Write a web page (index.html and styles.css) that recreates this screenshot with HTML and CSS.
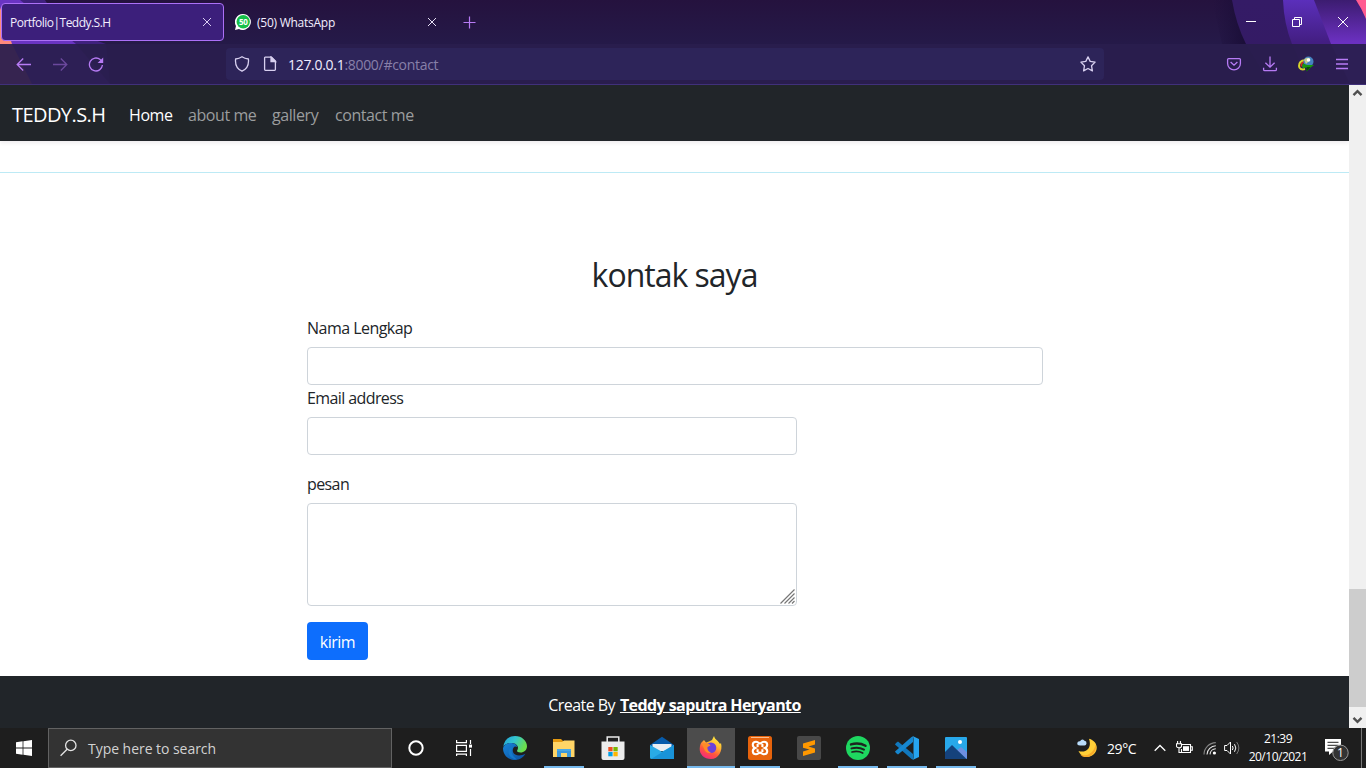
FILE: index.html
```html
<!DOCTYPE html>
<html lang="id">
<head>
<meta charset="utf-8">
<title>Portfolio|Teddy.S.H</title>
<link rel="stylesheet" href="styles.css">
</head>
<body>
<div class="screen">
  <header class="chrome">
    <svg class="theme" width="1366" height="84" viewBox="0 0 1366 84">
      <defs>
        <linearGradient id="base" x1="0" y1="0" x2="0" y2="1"><stop offset="0" stop-color="#25123e"/><stop offset=".55" stop-color="#251a49"/><stop offset="1" stop-color="#251a49"/></linearGradient>
        <linearGradient id="shade" x1="0" y1="0" x2="1" y2="0"><stop offset="0" stop-color="#1d0f3c" stop-opacity="0"/><stop offset="1" stop-color="#190d36"/></linearGradient>
        <linearGradient id="w1" x1="0" y1="0" x2="0" y2="1"><stop offset="0" stop-color="#341b66"/><stop offset="1" stop-color="#341a64"/></linearGradient>
        <linearGradient id="w2" x1="0" y1="0" x2="0" y2="1"><stop offset="0" stop-color="#5b2fbb"/><stop offset=".5" stop-color="#431e82"/></linearGradient>
        <linearGradient id="w3" x1="0" y1="0" x2="0" y2="1"><stop offset="0" stop-color="#3c1c70"/><stop offset=".5" stop-color="#6b30c0"/></linearGradient>
      </defs>
      <rect width="1366" height="84" fill="url(#base)"/>
      <path d="M0 0H45Q62 30 106 44L110 84H0Z" fill="#3f217e"/>
      <path d="M0 0H20L76 44L110 84H0Z" fill="#6a34c3"/>
      <path d="M0 7L12 44L32 84H0Z" fill="#ff897c"/>
      <path d="M1212 0H1234L1248 44H1222Z" fill="url(#shade)"/>
      <path d="M1232 0Q1236 24 1246 44L1270 84H1366V0Z" fill="url(#w1)"/>
      <path d="M1283 0Q1284 24 1292 44L1310 84H1366V0Z" fill="url(#w2)"/>
      <path d="M1314 0L1331 44L1350 84H1366V0Z" fill="url(#w3)"/>
      <path d="M1356 0H1366V19Q1362 9 1356 0Z" fill="#ff5b91"/>
    </svg>
    <div class="tabs">
      <div class="tab tab-active"><span class="t-tab1">Portfolio|Teddy.S.H</span>
        <svg width="10" height="10" viewBox="0 0 10 10" stroke="#d9cdf2" fill="none"><path d="M1 1L9 9M9 1L1 9"/></svg>
      </div>
      <div class="tab tab-idle">
        <svg class="wa" width="16" height="16" viewBox="0 0 16 16"><path d="M8 0a8 8 0 1 1-4 15L0 16L1 12A8 8 0 0 1 8 0Z" fill="#fff"/><circle cx="8.2" cy="7.8" r="6.7" fill="#16c149"/><text x="8.2" y="10.8" text-anchor="middle" class="wa-count">50</text></svg>
        <span class="t-tab2">(50) WhatsApp</span>
        <svg width="10" height="10" viewBox="0 0 10 10" stroke="#e6e0f5" fill="none"><path d="M1 1L9 9M9 1L1 9"/></svg>
      </div>
      <svg class="plus" width="13" height="13" viewBox="0 0 13 13" stroke="#b77bf5" fill="none" stroke-width="1.2"><path d="M6.5 .5V12.5M.5 6.5H12.5"/></svg>
      <div class="winbtns">
        <span><svg width="10" height="10" viewBox="0 0 10 10"><path d="M0 4.5H10" stroke="#fff"/></svg></span>
        <span><svg width="10" height="10" viewBox="0 0 10 10" fill="none" stroke="#fff"><path d="M.5 2.5H7.5V9.5H.5ZM2.5 2.5V.5H9.5V7.5H7.5"/></svg></span>
        <span><svg width="10" height="10" viewBox="0 0 10 10" stroke="#fff"><path d="M0 0L10 10M10 0L0 10"/></svg></span>
      </div>
    </div>
    <div class="toolbar">
      <div class="tools">
        <span><svg width="16" height="16" viewBox="0 0 16 16" class="ic"><path d="M15 8.5H1.5M7.2 2.5L1.2 8.5L7.2 14.5"/></svg></span>
        <span class="dim"><svg width="16" height="16" viewBox="0 0 16 16" class="ic"><path d="M1 8.5H14.5M8.8 2.5L14.8 8.5L8.8 14.5"/></svg></span>
        <span><svg width="16" height="16" viewBox="0 0 16 16" class="ic"><path d="M14.4 9A6.5 6.5 0 1 1 12.2 3.6L14 5.4"/><path d="M15.2 1.4V7H9.6Z" fill="#b77bf5" stroke="none"/></svg></span>
      </div>
      <div class="urlbar">
        <svg width="16" height="16" viewBox="0 0 16 16" class="ic pale"><path d="M8 .8C6 2.2 4 2.8 1.6 3C1 8.5 3.4 13.2 8 15.2C12.6 13.2 15 8.5 14.4 3C12 2.8 10 2.2 8 .8Z"/></svg>
        <svg width="16" height="16" viewBox="0 0 16 16" class="ic pale"><path d="M3.2 1.2H9.5L13.4 5V13.6Q13.4 14.4 12.6 14.4H3.4Q2.6 14.4 2.6 13.6V2Q2.6 1.2 3.2 1.2Z"/><path d="M9 1V5.5H13.5Z" fill="#d8d0f0"/></svg>
        <span class="t-url"><b>127.0.0.1</b>:8000/#contact</span>
        <svg class="ic pale star" width="16" height="16" viewBox="0 0 16 16"><path stroke-linejoin="round" d="M8 .9L10.2 5.4L15.1 6.1L11.5 9.7L12.4 14.9L8 12.5L3.6 14.9L4.5 9.7L.9 6.1L5.8 5.4Z"/></svg>
      </div>
      <div class="tools right">
        <span><svg width="16" height="16" viewBox="0 0 16 16" class="ic"><path d="M2.6 2.6H13.4Q14.4 2.6 14.4 3.6V7.4C14.4 11 11.5 13.8 8 13.8S1.6 11 1.6 7.4V3.6Q1.6 2.6 2.6 2.6ZM4.6 6L8 9.2L11.4 6"/></svg></span>
        <span><svg width="16" height="16" viewBox="0 0 16 16" class="ic"><path d="M8 .5V11M3.4 6.7L8 11.2L12.6 6.7M1.6 11.8V13.4Q1.6 14.6 2.8 14.6H13.2Q14.4 14.6 14.4 13.4V11.8"/></svg></span>
        <span><svg width="16" height="16" viewBox="0 0 16 16"><path d="M7 4.2C3 4.5 1 7 1 10C1 13 4 14 7 13" fill="none" stroke="#d9d42c" stroke-width="2"/><path d="M7 5.8C4.4 6 3 8 3.2 10.5" fill="none" stroke="#d3301c" stroke-width="1.5"/><path d="M6 8C4.6 9 4.6 11 6 12" fill="none" stroke="#2f9b2a" stroke-width="1.6"/><circle cx="10.5" cy="5.6" r="5" fill="#4583c0"/><path d="M6 4C7 1.6 11 1 12 2.4L10 6L8 8Z" fill="#c4cb91"/><circle cx="10.5" cy="4" r="1.8" fill="#fff"/><path d="M5 7.5L9 9L16 9L12 12L8.5 15.5L9 11.5L5.5 12Z" fill="#16970d"/><path d="M8.5 15.5L9 11L12.5 11Z" fill="#075305"/></svg></span>
        <span><svg width="14" height="14" viewBox="0 0 14 14" class="ic"><path d="M1 2.5H13M1 7H13M1 11.5H13"/></svg></span>
      </div>
    </div>
  </header>

  <div class="viewport">
    <div class="page">
      <nav class="navbar">
        <a class="brand">TEDDY.S.H</a>
        <a class="n1">Home</a><a class="n2">about me</a><a class="n3">gallery</a><a class="n4">contact me</a>
      </nav>
      <main class="contact">
        <h2><span>kontak saya</span></h2>
        <form class="form">
          <label class="l1">Nama Lengkap</label>
          <input class="field wide">
          <label class="l2">Email address</label>
          <input class="field mail">
          <label class="l3">pesan</label>
          <div class="field area"><svg width="15" height="15" viewBox="0 0 15 15" stroke="#777" stroke-width="1.2"><path d="M.5 14.5L14.5 .5M4.5 14.5L14.5 4.5M8.5 14.5L14.5 8.5M12 14.5L14.5 12"/></svg></div>
          <button type="button" class="send">kirim</button>
        </form>
      </main>
      <footer class="foot"><span class="f1">Create By</span> <a class="f2">Teddy saputra Heryanto</a></footer>
    </div>
    <aside class="scroll">
      <svg width="17" height="17" viewBox="0 0 17 17" fill="none" stroke="#505050" stroke-width="2.4"><path d="M4.5 10.2L8.5 6.2L12.5 10.2"/></svg>
      <i class="thumb"></i>
      <svg width="17" height="21" viewBox="0 0 17 21" fill="none" stroke="#505050" stroke-width="2.4"><path d="M4.5 10.8L8.5 14.8L12.5 10.8"/></svg>
    </aside>
  </div>

  <div class="taskbar">
    <span class="start"><svg width="16" height="16" viewBox="0 0 16 16" fill="#fff"><path d="M0 2.2L6.6 1.3V7.6H0ZM7.4 1.2L16 0V7.6H7.4ZM0 8.4H6.6V14.7L0 13.8ZM7.4 8.4H16V16L7.4 14.8Z"/></svg></span>
    <div class="search"><svg width="18" height="18" viewBox="0 0 18 18" fill="none" stroke="#e4e4e4" stroke-width="1.3"><circle cx="10.8" cy="6.4" r="5.2"/><path d="M7.1 10.2L.6 16.8"/></svg><span class="t-search">Type here to search</span></div>
    <span class="cell sys"><svg width="16" height="16" viewBox="0 0 16 16"><circle cx="8" cy="8" r="6.7" fill="none" stroke="#fff" stroke-width="2"/></svg></span>
    <span class="cell sys"><svg width="18" height="18" viewBox="0 0 18 18" fill="none" stroke="#fff" stroke-width="1.2"><path d="M1.6 1V3.6H11.4V1M1.6 6.4H11.4V12.4H1.6ZM1.6 17V15.2H11.4V17M15.5 1V5M15.5 10V17"/><path d="M14 5.6H17V8.6H14Z" fill="#fff" stroke="none"/></svg></span>
    <div class="apps">
      <span class="cell"><svg width="24" height="24" viewBox="0 0 24 24"><defs><linearGradient id="e1" x1="0" y1="0" x2="1" y2=".4"><stop offset="0" stop-color="#20a0dc"/><stop offset=".5" stop-color="#34c5ce"/><stop offset="1" stop-color="#6bdf4c"/></linearGradient><linearGradient id="e2" x1="0" y1="0" x2="1" y2="1"><stop stop-color="#1784d8"/><stop offset="1" stop-color="#0c4f9f"/></linearGradient></defs><path d="M.2 11C1 4.5 5.5 0 12 0C19 0 24 5 24 10.2C24 14 21 16.5 17.5 16.5C14.5 16.5 13.4 15.2 14.4 14C16.4 10.5 13.2 7 8.5 7C4 7 1 9 .2 11Z" fill="url(#e1)"/><path d="M0 12C1 8.5 4.5 6.8 8.5 7C12.5 7.2 14 9.2 14 11C11 9 9 13 10 16C11 19.5 17 20.8 22.4 17.8C20.5 21.5 16.5 24 12 24C5 24 0 19 0 12Z" fill="url(#e2)"/><path d="M9.5 11C7 15 9 20 14 23.5C8 23 5.5 19 5.5 15.5C5.5 12.5 7.5 11 9.5 11Z" fill="#1479cb"/></svg></span>
      <span class="cell open"><svg width="24" height="24" viewBox="0 0 24 24"><path d="M1 3H9L11 5H22V11H1Z" fill="#e59a11"/><path d="M1 6H10L12 4.5H22.5V21H1Z" fill="#ffd567"/><path d="M5 21V13H19V21H15V17H9V21Z" fill="#3c99dd"/><path d="M5 13H19V15H5Z" fill="#4aa9e6"/></svg></span>
      <span class="cell"><svg width="24" height="24" viewBox="0 0 24 24"><path d="M6.2 7V1H17.8V7" fill="none" stroke="#ececec" stroke-width="1.5"/><path d="M.5 5.5H23.5V22Q23.5 24 21.5 24H2.5Q.5 24 .5 22Z" fill="#ececec"/><path d="M7.3 11H11.6V15.3H7.3Z" fill="#ef4e20"/><path d="M12.4 11H16.7V15.3H12.4Z" fill="#7ab800"/><path d="M7.3 16H11.6V20.3H7.3Z" fill="#00a0e8"/><path d="M12.4 16H16.7V20.3H12.4Z" fill="#ffb600"/></svg></span>
      <span class="cell"><svg width="24" height="24" viewBox="0 0 24 24"><path d="M0 9L12 .7L24 9V12H0Z" fill="#075baa"/><path d="M2.5 8H21.5V15H2.5Z" fill="#e9eef2"/><path d="M0 9L12 15.7L24 9V21.5Q24 23 22.5 23H1.5Q0 23 0 21.5Z" fill="#29aae6"/><path d="M1 23L24 9V22.9Z" fill="#1993d8"/></svg></span>
      <span class="cell open active"><svg width="24" height="24" viewBox="0 0 24 24"><defs><linearGradient id="ff" x1=".8" y1="0" x2=".3" y2="1"><stop stop-color="#fff044"/><stop offset=".35" stop-color="#ffbd31"/><stop offset=".68" stop-color="#ff593a"/><stop offset="1" stop-color="#f52580"/></linearGradient></defs><path d="M3 6L5 4L7 6.5L10 5.5L13 4L15 0C16 4 19 4 21 8L22 7C24 15 19.5 23 12 23C5 23 .5 18 .7 13C.8 10 1.5 7 3 6Z" fill="url(#ff)"/><circle cx="12" cy="11.8" r="5.3" fill="#6a42db"/><path d="M3 8C7 6.5 10 7 11.5 9.5L8.5 11C8 13.5 9.5 16 12 16.5C9 18 6 16 5.2 13Z" fill="#ff8b26"/></svg></span>
      <span class="cell open"><svg width="24" height="24" viewBox="0 0 24 24"><rect width="24" height="24" rx="2.5" fill="#e7630c"/><path d="M3 1.5H21" stroke="#f7bd91"/><path d="M8 5.8C3.8 5.8 4 10.7 7.2 12C3.8 13.3 4 18.2 8 18.2C10 18.2 10.4 16.6 12 16.6S14 18.2 16 18.2C20 18.2 20.2 13.3 16.8 12C20 10.7 20.2 5.8 16 5.8C14 5.8 13.6 7.4 12 7.4S10 5.8 8 5.8ZM9.6 8V11M14.4 8V11M9.6 13.2V16M14.4 13.2V16" fill="none" stroke="#fff" stroke-width="2.1"/></svg></span>
      <span class="cell"><svg width="24" height="24" viewBox="0 0 24 24"><rect width="24" height="24" rx="2" fill="#484848"/><path d="M6 7.5L18 4V8.6L11.5 10.5L18 12.4V16.5L6 20V15.4L12.5 13.5L6 11.7Z" fill="#ff9800"/></svg></span>
      <span class="cell open"><svg width="24" height="24" viewBox="0 0 24 24"><circle cx="12" cy="12" r="12" fill="#1ed760"/><g fill="none" stroke="#1d241f" stroke-linecap="round"><path d="M5 8.4C10 7 15.5 7.5 19.5 9.8" stroke-width="2.4"/><path d="M5.5 12.4C10 11.1 14.5 11.6 18 13.6" stroke-width="2"/><path d="M6 16C10 15 13.5 15.3 16.7 17" stroke-width="1.7"/></g></svg></span>
      <span class="cell open"><svg width="24" height="24" viewBox="0 0 24 24"><path d="M1 7L3 5.5L18 18V23.5L16.5 23L0 8.5Z" fill="#1178bd"/><path d="M1 17L3 18.5L18 6V.5L16.5 1L0 15.5Z" fill="#1687d0"/><path d="M17.5 0L24 3V21L17.5 24Q18.5 23 18.5 21.5V2.5Q18.5 1 17.5 0Z" fill="#26a4ef"/></svg></span>
      <span class="cell open"><svg width="22" height="22" viewBox="0 0 22 22"><rect width="22" height="22" rx="1" fill="#28a8ea"/><path d="M11 14L16 10L22 15V22Z" fill="#6e8fe0"/><path d="M0 15L7 8L21.5 22H0Z" fill="#15427c"/><circle cx="15" cy="5" r="2" fill="#fff"/></svg></span>
    </div>
    <div class="tray">
      <svg class="moon" width="20" height="20" viewBox="0 0 20 20"><path d="M12 .8C20.5 3 22 12 16.5 16.5C11.5 21 4 19 1.5 13C10 15.5 15 9 12 .8Z" fill="#ffcf38"/><path d="M3 16.5C9 19 16.5 16 18.8 6.5C20.5 13 14 21.5 5.5 18.4Z" fill="#f8aa28"/><path d="M3 7.5Q0 7.5 .3 5Q.6 3 3 3.3Q5 0 7.5 2.7Q9.8 3 9.5 5.5Q9.2 7.5 7.5 7.5Z" fill="#b9dcfa"/></svg>
      <span class="t-temp">29°C</span>
      <svg class="chev" width="12" height="8" viewBox="0 0 12 8" fill="none" stroke="#fff" stroke-width="1.3"><path d="M.7 6.8L6 1.5L11.3 6.8"/></svg>
      <svg class="bat" width="17" height="14" viewBox="0 0 17 14" fill="none" stroke="#fff" stroke-width="1.1"><path d="M5.5 3.5H14.5V11.5H5.5V8M14.5 5.7H16.3V9.3H14.5M1.6 0V3M4.4 0V3M.5 2.8H5.5V5Q5.5 6.8 3 6.8T.5 5ZM3 7V11.5H5"/><path d="M7 5.2H13V9.9H7Z" fill="#fff" stroke="none"/></svg>
      <svg class="wifi" width="14" height="14" viewBox="0 0 14 14" fill="none" stroke="#e8e8e8" stroke-width="1.1"><path d="M4 13.4A9 9 0 0 1 12.8 4.8M7 13.4A6 6 0 0 1 12.8 7.8"/><path d="M1 13.4A12 12 0 0 1 12.8 1.6" stroke="#858585"/><circle cx="11.4" cy="12" r="1.6" fill="#fff" stroke="none"/></svg>
      <svg class="vol" width="16" height="14" viewBox="0 0 16 14" fill="none" stroke="#fff"><path d="M.6 4.5H3L6.5 1V13L3 9.5H.6ZM8.4 5Q9.8 7 8.4 9M10.5 3.2Q13.2 7 10.5 10.8"/><path d="M12.7 1Q17 7 12.7 13" stroke="#777"/></svg>
      <div class="clock"><span class="c1">21:39</span><span class="c2">20/10/2021</span></div>
      <svg class="note" width="26" height="26" viewBox="0 0 26 26"><path d="M1 4H17V16.5H9L5 20V16.5H1Z" fill="#fff"/><path d="M3.5 7.3H14.5M3.5 10.3H14.5M3.5 13.3H10" stroke="#222"/><circle cx="16.5" cy="17.8" r="7.7" fill="#333" stroke="#999"/><text x="16.5" y="22" text-anchor="middle" class="badge">1</text></svg>
      <i class="peek"></i>
    </div>
  </div>
</div>
</body>
</html>
```
FILE: styles.css
```css
* { box-sizing: border-box; }
body { margin: 0; overflow: hidden; font-family: "Open Sans", "Noto Sans", sans-serif; }
svg { display: block; flex: none; }
span, a { white-space: nowrap; }
.screen { width: 1366px; height: 768px; display: flex; flex-direction: column; }

.chrome { position: relative; height: 85px; border-bottom: 1px solid #40307a; }
.theme { position: absolute; left: 0; top: 0; }
.tabs { position: relative; height: 44px; display: flex; align-items: center; color: #f3eefe; font-size: 12px; }
.tab { display: flex; align-items: center; justify-content: space-between; }
.tab-active { width: 223px; height: 38px; margin-left: 1px; padding: 0 11px 0 8px; background: #3c1f7b; border: 1px solid #ac70f7; border-radius: 4px; }
.t-tab1 { letter-spacing: -.52px; }
.tab-idle { width: 202px; margin-left: 11px; }
.tab-idle .t-tab2 { margin: 0 auto 0 6px; letter-spacing: -.25px; }
.wa-count { font: bold 8px "Open Sans", sans-serif; fill: #fff; letter-spacing: -.4px; }
.plus { margin-left: 26px; }
.winbtns { display: flex; margin-left: auto; }
.winbtns span { width: 46px; display: flex; justify-content: center; }
.toolbar { position: relative; height: 40px; display: flex; align-items: center; background: rgba(41, 30, 78, .94); }
.tools { display: flex; padding-left: 6px; }
.tools span { width: 36px; display: flex; justify-content: center; align-items: center; }
.dim { opacity: .45; }
.tools.right { margin-left: auto; padding: 0 6px 0 0; }
.ic { fill: none; stroke: #b77bf5; stroke-width: 1.3; }
.ic.pale { stroke: #d8d0f0; }
.urlbar { width: 878px; height: 32px; margin-left: 112px; padding: 0 8px; display: flex; align-items: center; gap: 12px; background: #2d2459; border-radius: 4px; }
.urlbar .star { margin-left: auto; }
.t-url { font-size: 14px; letter-spacing: -.3px; color: #8880a9; margin-left: -2px; padding-top: 1px; }
.t-url b { font-weight: 400; color: #f1edff; }

.viewport { height: 643px; display: flex; }
.page { width: 1349px; display: flex; flex-direction: column; background: #fff; color: #212529; font-size: 16px; line-height: 24px; }
.navbar { height: 56px; padding: 3px 12px 0; display: flex; align-items: center; gap: 16px; background: #212529; color: #9b9d9e; letter-spacing: -.42px; box-shadow: 0 2px 4px rgba(33, 0, 33, .08); }
.brand { font-size: 20px; color: #fff; width: 93px; margin-right: 8px; letter-spacing: -.57px; }
.n1 { color: #fff; width: 43px; }
.n2 { width: 68px; }
.n3 { width: 47px; }
.contact { margin-top: 31px; border-top: 1px solid #bdeaf5; flex: 1; padding-top: 83px; }
h2 { margin: 0 0 21px; font-size: 32px; font-weight: 400; line-height: 38px; letter-spacing: -1px; text-align: center; }
.form { width: 736px; margin-left: 307px; display: flex; flex-direction: column; align-items: flex-start; }
label { margin-bottom: 8px; white-space: nowrap; padding-top: 1px; height: 24px; letter-spacing: -.6px; }
.l1 { letter-spacing: -.53px; }
.field { height: 38px; border: 1px solid #ced4da; border-radius: 4px; background: #fff; width: 490px; outline: none; }
.field.wide { width: 736px; }
.mail { margin-bottom: 16px; }
.field.area { height: 103px; display: flex; align-items: flex-end; justify-content: flex-end; padding: 1px; margin-bottom: 16px; }
.send { width: 61px; height: 38px; border: 0; border-radius: 4px; background: #0d6efd; color: #fff; font: 16px "Open Sans", sans-serif; letter-spacing: -.5px; padding: 1px 0 0; }
.foot { height: 52px; background: #212529; color: #fff; display: flex; justify-content: center; gap: 5px; padding-top: 17px; }
.f1 { letter-spacing: -.55px; }
.f2 { font-weight: 700; text-decoration: underline; letter-spacing: -.58px; }
.scroll { width: 17px; background: #f0f0f0; display: flex; flex-direction: column; }
.thumb { height: 118px; margin-top: auto; background: #cdcdcd; }

.taskbar { height: 40px; background: #1e1e1e; display: flex; align-items: center; color: #fff; }
.start { width: 48px; display: flex; justify-content: center; }
.search { width: 344px; height: 40px; border: 1px solid #626262; background: #333; display: flex; align-items: center; gap: 10px; padding-left: 11px; color: #d2d2d2; font-size: 14px; letter-spacing: -.04px; }
.cell { width: 48px; height: 40px; display: flex; align-items: center; justify-content: center; }
.apps { display: flex; gap: 1px; margin-left: 3px; }
.open { background: linear-gradient(#76b9ed, #76b9ed) center bottom / 40px 2px no-repeat; }
.open.active { background: linear-gradient(#76b9ed, #76b9ed) center bottom / 48px 2px no-repeat, #4c4c4c; }
.tray { margin-left: auto; height: 40px; display: flex; align-items: center; font-size: 14px; }
.t-temp { margin-left: 10px; width: 30px; letter-spacing: -.4px; }
.chev { margin-left: 17px; }
.bat { margin-left: 10px; }
.wifi { margin-left: 10px; }
.vol { margin-left: 7px; }
.clock { margin-left: 8px; width: 60px; display: flex; flex-direction: column; align-items: center; font-size: 12px; line-height: 18px; letter-spacing: -.5px; }
.note { margin-left: 16px; }
.badge { font: 12px "Open Sans", sans-serif; fill: #fff; }
.peek { width: 1px; height: 40px; margin: 0 4px 0 11px; background: #777; }
```
